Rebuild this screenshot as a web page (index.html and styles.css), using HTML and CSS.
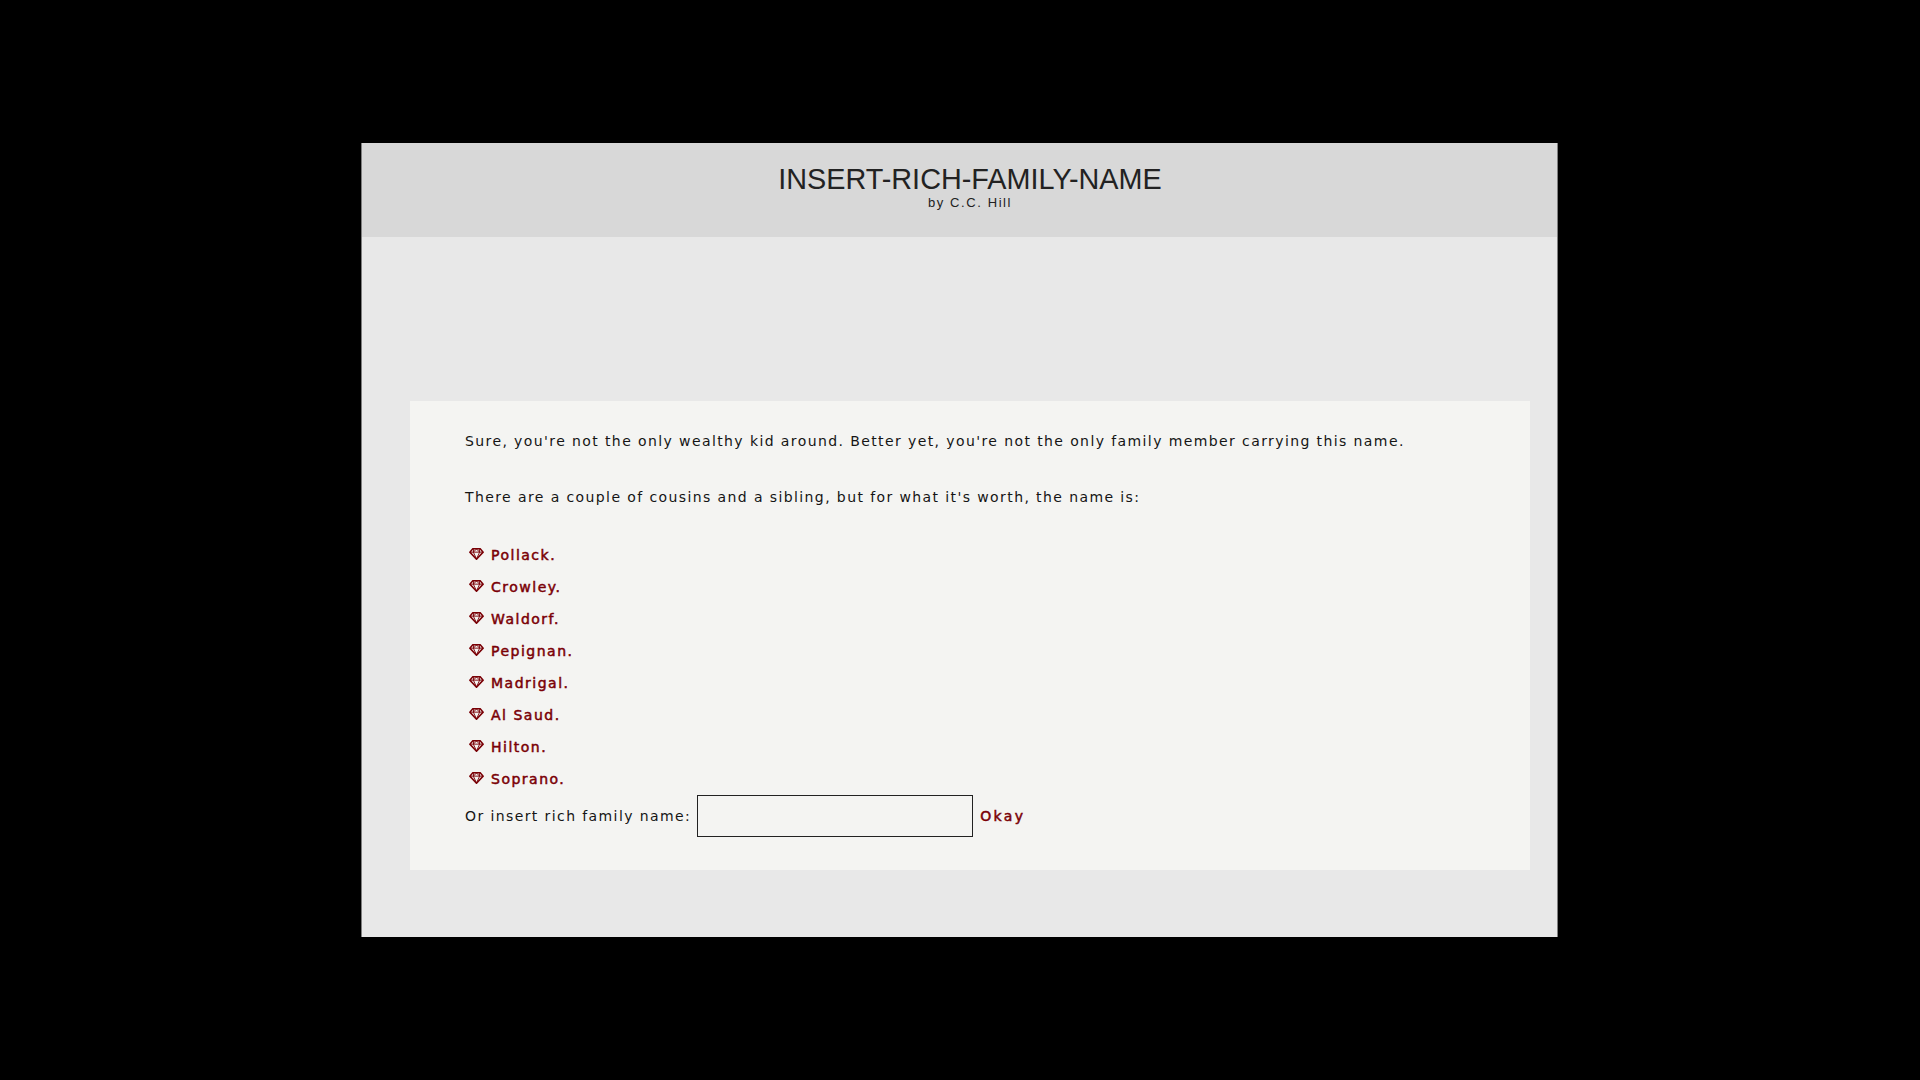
FILE: index.html
```html
<!DOCTYPE html>
<html lang="en">
<head>
    <meta charset="UTF-8">
    <meta name="viewport" content="width=device-width, initial-scale=1.0">
    <title>INSERT-RICH-FAMILY-NAME</title>
    <link rel="stylesheet" href="styles.css">
</head>
<body>

    <svg class="sprite" width="0" height="0" aria-hidden="true">
        <symbol id="gem" viewBox="0 0 16 13">
            <path d="M4 .8h8l3.2 3.7L8 12.2.8 4.5z" fill="#f4f4f2" stroke="#7a0006" stroke-width="1.7" stroke-linejoin="round"/>
            <path d="M1 4.5h14M5 1 4.6 4.5 8 12l3.4-7.5L11 1M4.6 4.5 8 1l3.4 3.5" fill="none" stroke="#7a0006" stroke-width="1"/>
        </symbol>
    </svg>

    <div class="container">
        <header class="header">
            <h1>INSERT-RICH-FAMILY-NAME</h1>
            <p class="byline">by C.C. Hill</p>
        </header>

        <main class="main">
            <section class="passage">
                <p>Sure, you're not the only wealthy kid around. Better yet, you're not the only family member carrying this name.</p>
                <p>There are a couple of cousins and a sibling, but for what it's worth, the name is:</p>

                <ul class="names">
                    <li><svg class="gem"><use href="#gem"></use></svg><a href="#">Pollack.</a></li>
                    <li><svg class="gem"><use href="#gem"></use></svg><a href="#">Crowley.</a></li>
                    <li><svg class="gem"><use href="#gem"></use></svg><a href="#">Waldorf.</a></li>
                    <li><svg class="gem"><use href="#gem"></use></svg><a href="#">Pepignan.</a></li>
                    <li><svg class="gem"><use href="#gem"></use></svg><a href="#">Madrigal.</a></li>
                    <li><svg class="gem"><use href="#gem"></use></svg><a href="#">Al Saud.</a></li>
                    <li><svg class="gem"><use href="#gem"></use></svg><a href="#">Hilton.</a></li>
                    <li><svg class="gem"><use href="#gem"></use></svg><a href="#">Soprano.</a></li>
                </ul>

                <div class="insert">
                    <label for="familyName">Or insert rich family name:</label>
                    <input type="text" id="familyName">
                    <a href="#" class="okay">Okay</a>
                </div>
            </section>
        </main>
    </div>

</body>
</html>
```

FILE: styles.css
```css
body {
    margin: 0;
    padding: 143px 0 0 361px;
    height: 1080px;
    box-sizing: border-box;
    overflow: hidden;
    background-color: #000;
    font-family: "DejaVu Sans", sans-serif;
    font-size: 14px;
    letter-spacing: 1.4px;
    color: #151515;
}

.sprite {
    display: block;
}

.container {
    width: 1195px;
    border-left: 1px solid #7f7f7f;
    border-right: 1px solid #7f7f7f;
    background-color: #e8e8e8;
}

.header {
    height: 94px;
    box-sizing: border-box;
    padding: 19px 27px 0 48px;
    background-color: #d8d8d8;
    text-align: center;
    font-family: "Liberation Sans", Arial, sans-serif;
    color: #222;
}

.header h1 {
    margin: 0;
    font-size: 28.8px;
    font-weight: normal;
    line-height: 34px;
    letter-spacing: 0;
}

.byline {
    margin: 0;
    font-size: 13px;
    line-height: 13px;
    letter-spacing: 1.6px;
}

.main {
    padding: 164px 27px 67px 48px;
}

.passage {
    height: 469px;
    box-sizing: border-box;
    padding: 28px 55px 0;
    background-color: #f4f4f2;
}

.passage p {
    margin: 0 0 32px;
    line-height: 24px;
}

.names {
    list-style: none;
    margin: -2px 0 0;
    padding: 0;
}

.names li {
    display: flex;
    align-items: center;
    height: 32px;
    padding-left: 4px;
    letter-spacing: 1.5px;
}

.gem {
    width: 15px;
    height: 12px;
    margin-right: 7px;
    margin-top: -2px;
}

a {
    color: #7a0006;
    text-decoration: none;
    -webkit-text-stroke: 0.5px #7a0006;
}

.okay {
    letter-spacing: 2.4px;
}

.insert {
    display: flex;
    align-items: center;
}

.insert input {
    width: 276px;
    height: 42px;
    box-sizing: border-box;
    margin: 0 7px 0 6px;
    padding: 0 6px;
    border: 1px solid #222;
    background-color: #f4f4f2;
}
```
